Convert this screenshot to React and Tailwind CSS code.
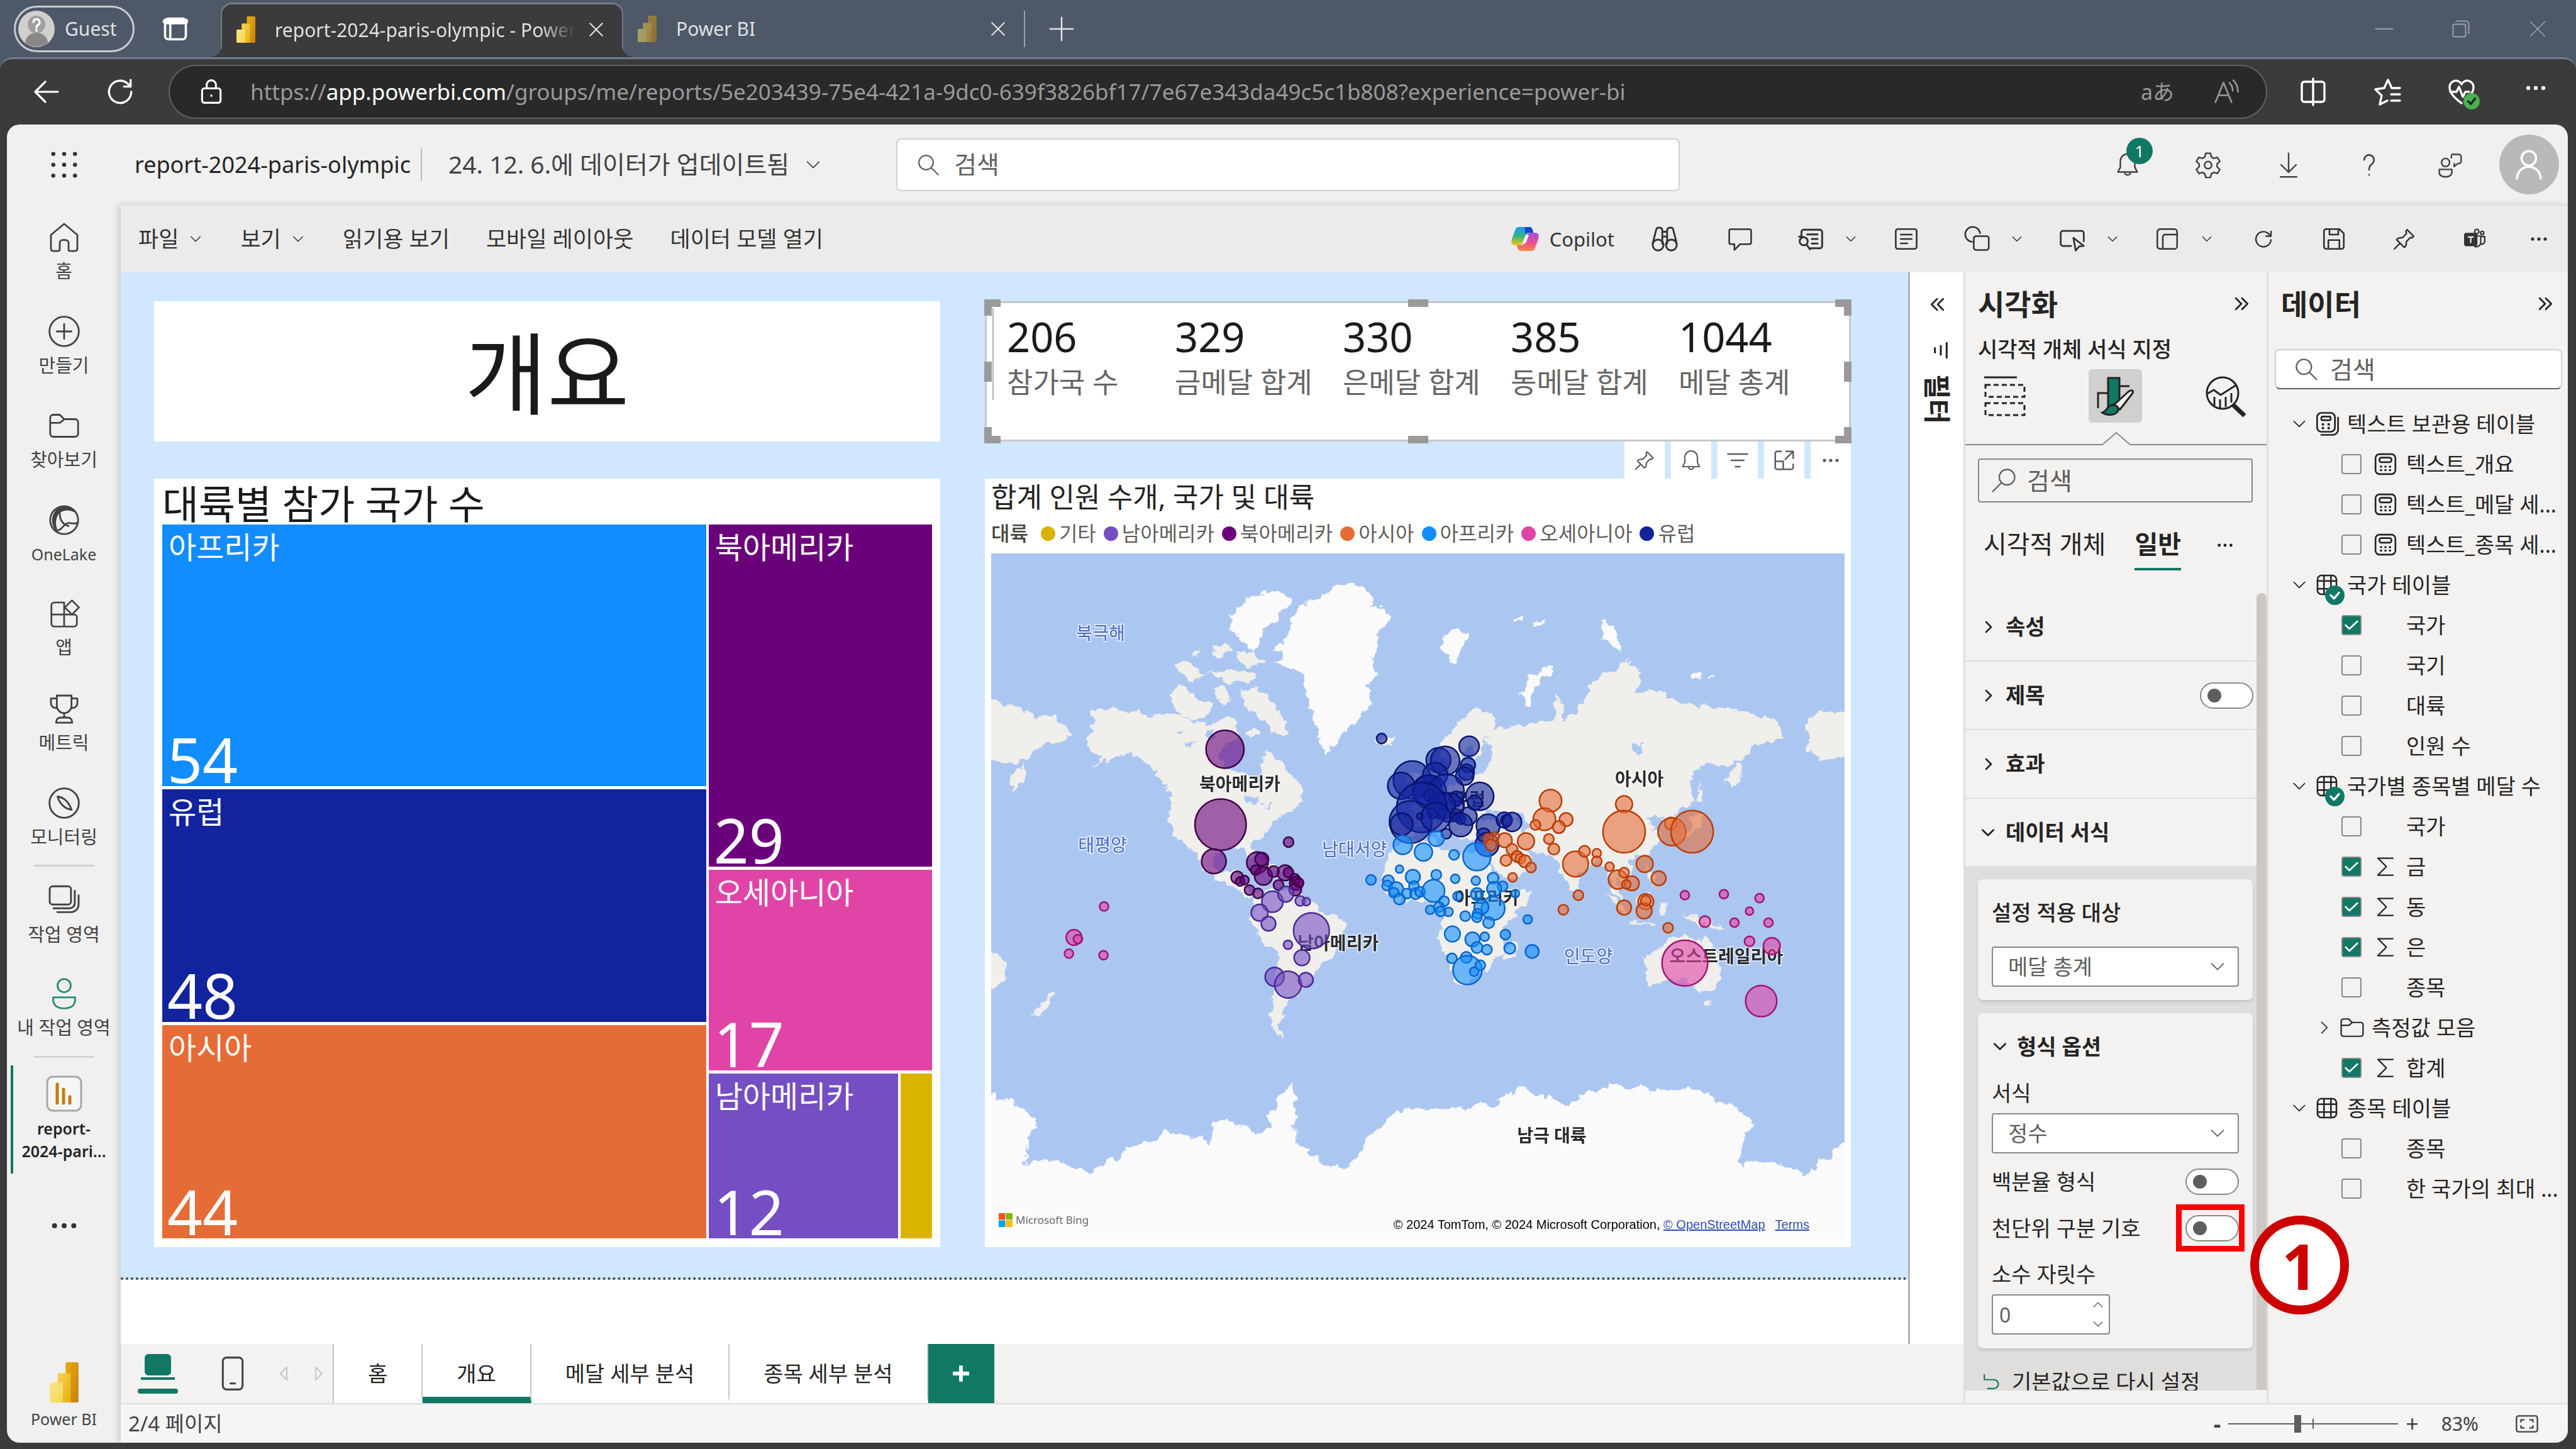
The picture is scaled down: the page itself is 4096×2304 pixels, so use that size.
import React, { useState } from 'react';

const TEAL = '#117865';

// ---------- icons ----------

const Icon = ({ size = 44, sw = 1.4, fill = 'none', className = '', children }) => (
  <svg
    width={size}
    height={size}
    viewBox="0 0 24 24"
    fill={fill}
    stroke="currentColor"
    strokeWidth={sw}
    strokeLinecap="round"
    strokeLinejoin="round"
    className={`shrink-0 ${className}`}
    aria-hidden="true"
  >
    {children}
  </svg>
);

const ChevronDown = ({ size = 28, sw = 1.6, className }) => (
  <Icon size={size} sw={sw} className={className}><path d="M4 8l8 8 8-8" /></Icon>
);
const ChevronRight = ({ size = 28, sw = 1.6, className }) => (
  <Icon size={size} sw={sw} className={className}><path d="M8 4l8 8-8 8" /></Icon>
);
const DoubleRight = ({ className }) => (
  <Icon size={26} sw={2.6} className={className}><path d="M3 4l8 8-8 8M12 4l8 8-8 8" /></Icon>
);
const DoubleLeft = () => (
  <Icon size={26} sw={2.6}><path d="M21 4l-8 8 8 8M12 4l-8 8 8 8" /></Icon>
);
const CloseIcon = ({ size = 30, sw = 1.6 }) => (
  <Icon size={size} sw={sw}><path d="M3 3l18 18M21 3L3 21" /></Icon>
);
const SearchIcon = ({ size = 42, sw = 1.3 }) => (
  <Icon size={size} sw={sw}><circle cx="10" cy="10" r="6.5" /><path d="M15 15l6 6" /></Icon>
);
const Dots = ({ size = 36 }) => (
  <Icon size={size} fill="currentColor" sw={0}>
    <circle cx="4" cy="12" r="2.1" /><circle cx="12" cy="12" r="2.1" /><circle cx="20" cy="12" r="2.1" />
  </Icon>
);
const BellIcon = ({ size = 46 }) => (
  <Icon size={size} sw={1.3}>
    <path d="M12 3a6 6 0 0 0-6 6v5l-2 4h16l-2-4V9a6 6 0 0 0-6-6zM9.500 18a2.500 2.500 0 0 0 5 0" />
  </Icon>
);
const PinIcon = ({ size = 42 }) => (
  <Icon size={size} sw={1.4}>
    <path d="M14.500 3.500l6 6-1.500 1.500-1.500-.3-3.500 3.500-.5 4-1.500 1.500-7-7 1.500-1.500 4-.5L14 7l-.5-2zM8 16l-5 5" />
  </Icon>
);
const FolderIcon = ({ size = 56 }) => (
  <Icon size={size} sw={1.2}>
    <path d="M2.500 6.500a2 2 0 0 1 2-2H9l3 3h7.500a2 2 0 0 1 2 2v8a2 2 0 0 1-2 2h-15a2 2 0 0 1-2-2zM2.500 10H8.500c1.500 0 2-1 3.500-2.500" />
  </Icon>
);
const TableIcon = () => (
  <Icon size={38} sw={1.6}>
    <rect x="2.500" y="2.500" width="19" height="19" rx="4" />
    <path d="M9 2.500v19M16 2.500v19M2.500 8h19M2.500 16h19" />
  </Icon>
);
const CalcIcon = () => (
  <Icon size={38} sw={1.7}>
    <rect x="2" y="2" width="20" height="20" rx="4" />
    <rect x="6" y="5.500" width="12" height="4.500" rx="1.800" />
    <path d="M7.500 14.500h.1M12 14.500h.1M16.500 14.500h.1M7.500 18h.1M12 18h.1M16.500 18h.1" strokeWidth="2.300" />
  </Icon>
);
const CalcStackIcon = () => (
  <Icon size={40} sw={1.6}>
    <rect x="2" y="1.500" width="17" height="18" rx="4" />
    <rect x="6" y="5" width="9" height="3.500" rx="1.500" />
    <path d="M7.500 12.500h.1M13 12.500h.1M7.500 16h.1M13 16h.1" strokeWidth="2.400" />
    <path d="M6 22.500h11a5 5 0 0 0 5-5V6" />
  </Icon>
);
const SigmaIcon = () => (
  <Icon size={36} sw={1.5}><path d="M20 3H4l9 9-9 9h16" /></Icon>
);

const PowerBiLogo = ({ width = 40, height = 48, dim = false }) => (
  <svg width={width} height={height} viewBox="0 0 40 56" className={dim ? 'shrink-0 opacity-50' : 'shrink-0'} aria-hidden="true">
    <defs>
      <linearGradient id="pbA" x1="0" y1="0" x2="1" y2="1"><stop offset="0" stopColor="#e6ad10" /><stop offset="1" stopColor="#c87e0e" /></linearGradient>
      <linearGradient id="pbB" x1="0" y1="0" x2="1" y2="1"><stop offset="0" stopColor="#f6d751" /><stop offset="1" stopColor="#e6ad10" /></linearGradient>
      <linearGradient id="pbC" x1="0" y1="0" x2="1" y2="1"><stop offset="0" stopColor="#f9e589" /><stop offset="1" stopColor="#f6d751" /></linearGradient>
    </defs>
    <rect x="22" y="0" width="18" height="56" rx="2" fill="url(#pbA)" />
    <path d="M11 17a2 2 0 0 1 2-2h14a2 2 0 0 1 2 2v39H11z" fill="url(#pbB)" />
    <path d="M0 30a2 2 0 0 1 2-2h13a3 3 0 0 1 3 3v25H2a2 2 0 0 1-2-2z" fill="url(#pbC)" />
  </svg>
);

const CopilotLogo = () => (
  <svg width="46" height="42" viewBox="0 0 46 42" aria-hidden="true">
    <defs>
      <linearGradient id="cpA" x1="0" y1="0" x2="0" y2="1"><stop offset="0" stopColor="#1b9df0" /><stop offset="0.500" stopColor="#36b37e" /><stop offset="1" stopColor="#f7c416" /></linearGradient>
      <linearGradient id="cpB" x1="0" y1="0" x2="0" y2="1"><stop offset="0" stopColor="#a04fe0" /><stop offset="0.500" stopColor="#e84a9c" /><stop offset="1" stopColor="#f9873c" /></linearGradient>
    </defs>
    <path d="M14 2h16c3 0 4 2 5 5l1 4h-6c-4 0-6 2-7 6l-3 9c-1 4-3 5-6 5H7c-5 0-7-4-5-10l5-14c1-3 3-5 7-5z" fill="url(#cpA)" />
    <path d="M22 2h8c3 0 4 2 5 5l1 4h-6c-3 0-5 1-6 4z" fill="#1645c8" />
    <path d="M32 40H16c-3 0-4-2-5-5l-1-4h6c4 0 6-2 7-6l3-9c1-4 3-5 6-5h7c5 0 7 4 5 10l-5 14c-1 3-3 5-7 5z" fill="url(#cpB)" />
    <path d="M23 16l-4 12h3c2 0 3-2 4-5l3-8h-3z" fill="#fff" opacity="0.900" />
  </svg>
);

// ---------- browser chrome ----------

const BrowserTabs = () => (
  <div className="flex h-[91px] items-center bg-[#4e5867] text-[30px] text-[#dfe1e4]">
    <button className="ml-[22px] flex h-[74px] w-[192px] items-center gap-4 rounded-full border-3 border-[#c9ccd0] pl-1">
      <svg width="58" height="58" viewBox="0 0 58 58" aria-hidden="true">
        <circle cx="29" cy="29" r="29" fill="#d2d0ce" />
        <path d="M11 51a18 16 0 0 1 36 0 29 29 0 0 1-36 0z" fill="#8a8886" />
        <circle cx="29" cy="22" r="14" fill="#a19f9d" />
        <path d="M24 18a5 5 0 1 1 7 5c-2 1-2 2-2 4M29 31v1" stroke="#fff" strokeWidth="3.500" fill="none" strokeLinecap="round" />
      </svg>
      Guest
    </button>
    <button className="ml-[43px] text-white" aria-label="탭 작업">
      <Icon size={44} sw={2}><rect x="3" y="3" width="18" height="18" rx="3" /><path d="M3.500 5.500h17" strokeWidth="5" /><path d="M7.500 8v13" /></Icon>
    </button>
    <div className="relative ml-[50px] flex h-[87px] w-[640px] items-center self-end rounded-t-[18px] border-x-2 border-t-3 border-[#717d8c] bg-[#3b3b3b] pb-1 pl-5 before:absolute before:bottom-0 before:-left-5 before:size-5 before:bg-[radial-gradient(circle_at_0_0,transparent_20px,#3b3b3b_20px)] after:absolute after:-right-5 after:bottom-0 after:size-5 after:bg-[radial-gradient(circle_at_100%_0,transparent_20px,#3b3b3b_20px)]">
      <PowerBiLogo width={36} height={42} />
      <span className="ml-7 w-[478px] overflow-hidden whitespace-nowrap [mask-image:linear-gradient(to_right,#000_88%,transparent)]">report-2024-paris-olympic - Power BI</span>
      <button className="ml-5" aria-label="탭 닫기"><CloseIcon size={26} sw={2} /></button>
    </div>
    <div className="flex w-[637px] items-center pl-5">
      <PowerBiLogo width={36} height={42} dim />
      <span className="ml-7 flex-1">Power BI</span>
      <button className="mr-7" aria-label="탭 닫기"><CloseIcon size={26} sw={2} /></button>
    </div>
    <div className="h-[58px] w-[2px] bg-[#9aa2ad]" />
    <button className="ml-[38px]" aria-label="새 탭"><Icon size={40} sw={1.5}><path d="M12 1v22M1 12h22" /></Icon></button>
    <div className="ml-auto flex text-[#98a0aa]">
      <button className="flex w-[122px] justify-center" aria-label="최소화"><Icon size={30} sw={1.6}><path d="M1 12h22" /></Icon></button>
      <button className="flex w-[122px] justify-center" aria-label="이전 크기로"><Icon size={30} sw={1.6}><rect x="2" y="6" width="16" height="16" rx="2" /><path d="M6 2h12a4 4 0 0 1 4 4v12" /></Icon></button>
      <button className="flex w-[122px] justify-center" aria-label="닫기"><CloseIcon size={30} sw={1.4} /></button>
    </div>
  </div>
);

const AddressBar = () => (
  <div className="bg-[#4e5867]">
    <div className="flex h-[107px] items-center rounded-t-[20px] border-t-3 border-[#717d8c] bg-[#3b3b3b] text-white">
      <button className="ml-[50px]" aria-label="뒤로"><Icon size={48} sw={1.6}><path d="M21 12H3M11 4l-8 8 8 8" /></Icon></button>
      <button className="ml-[68px]" aria-label="새로 고침"><Icon size={50} sw={1.6}><path d="M20.500 12A8.500 8.500 0 1 1 17.500 5.500L20 8M20 3v5h-5" /></Icon></button>
      <div className="ml-[52px] flex h-[86px] flex-1 items-center rounded-full border-2 border-[#616161] bg-[#292929] pr-[40px] pl-[44px]">
        <Icon size={44} sw={1.7}><rect x="4" y="9" width="16" height="12.500" rx="2" /><path d="M8 9V6a4 4 0 0 1 8 0v3M12 15v.5" /></Icon>
        <span className="ml-10 flex-1 text-[35px] whitespace-nowrap text-[#9a9a9a]">
          https://<span className="text-white">app.powerbi.com</span>/groups/me/reports/5e203439-75e4-421a-9dc0-639f3826bf17/7e67e343da49c5c1b808?experience=power-bi
        </span>
        <button className="mr-[62px] text-[34px] leading-none text-[#9a9a9a]" aria-label="번역">aあ</button>
        <button className="text-[#9a9a9a]" aria-label="소리내어 읽기">
          <Icon size={44} sw={1.4}><path d="M2 21L9 4l7 17M4.500 15h9M14 4c2 2 3 4 3 7M17.500 2c3 3 4 6 4 10" /></Icon>
        </button>
      </div>
      <div className="ml-[14px] flex pr-[5px]">
        <button className="flex w-[118px] justify-center" aria-label="화면 분할"><Icon size={48} sw={1.7}><path d="M9 4H5a2 2 0 0 0-2 2v12a2 2 0 0 0 2 2h4M15 4h4a2 2 0 0 1 2 2v12a2 2 0 0 1-2 2h-4M12 1.500v21M9 4h6M9 20h6" /></Icon></button>
        <button className="flex w-[118px] justify-center" aria-label="즐겨찾기"><Icon size={48} sw={1.7}><path d="M22 9h-6.500L12.500 2.500 9.500 9l-7 1 5 5-1.500 7 6-3M15 14h7M15 19h7" /></Icon></button>
        <button className="relative flex w-[118px] justify-center" aria-label="브라우저 필수 요소">
          <Icon size={48} sw={1.7}><path d="M12 21C5 16 2.500 12 2.500 8.500A5 5 0 0 1 12 6a5 5 0 0 1 9.500 2.500c0 2-1 4-2 5.500M3 12h5l2-4 3 8 2-4h3" /></Icon>
          <span className="absolute right-[30px] -bottom-1 size-[26px] rounded-full bg-[#4caf50]"><Icon size={26} sw={3} className="text-[#1f1f1f]"><path d="M7 12l4 4 6-8" /></Icon></span>
        </button>
        <button className="flex w-[118px] justify-center" aria-label="설정 및 기타"><Dots size={36} /></button>
      </div>
    </div>
  </div>
);

// ---------- app header ----------

const headerActions = [
  { label: '설정', icon: <Icon size={46} sw={1.3}><path d="M10 2.500h4l.7 3 2 1.200 3-.9 2 3.400-2.300 2.200v2.200l2.300 2.200-2 3.400-3-.9-2 1.200-.7 3h-4l-.7-3-2-1.200-3 .9-2-3.400 2.300-2.200v-2.200L2.300 9.200l2-3.400 3 .9 2-1.200z" /><circle cx="12" cy="12.300" r="3" /></Icon> },
  { label: '다운로드', icon: <Icon size={44} sw={1.3}><path d="M12 2v16M5.500 12l6.500 6.500 6.500-6.500M5 22.500h14" /></Icon> },
  { label: '도움말', icon: <Icon size={42} sw={1.5}><path d="M7.500 7.500a4.500 4.500 0 1 1 7.500 3.500c-2 1.500-3 2.500-3 5.500M12 21v.3" /></Icon> },
  { label: '피드백', icon: <Icon size={44} sw={1.3}><circle cx="8.500" cy="10" r="3.500" /><path d="M3 16h11v2c0 3-2 4.500-5.500 4.500S3 21 3 18zM14 3h6a2 2 0 0 1 2 2v4a2 2 0 0 1-2 2h-1l-3 2.500V11M13.500 6V4" /></Icon> },
];

const AppHeader = () => (
  <header className="flex h-[127px] items-center">
    <button className="flex w-[181px] justify-center text-[#333]" aria-label="앱 시작 관리자">
      <Icon size={46} fill="currentColor" sw={0}>
        {[3, 12, 21].map(y => [3, 12, 21].map(x => <circle key={`${x}-${y}`} cx={x} cy={y} r="1.700" />))}
      </Icon>
    </button>
    <h1 className="ml-[22px] text-[36px] text-[#242424]">report-2024-paris-olympic</h1>
    <div className="ml-4 h-[52px] w-[2px] bg-[#bdbdbd]" />
    <button className="ml-[42px] flex items-center text-[39px] text-[#424242]">
      24. 12. 6.에 데이터가 업데이트됨
      <ChevronDown className="ml-6" />
    </button>
    <label className="ml-[118px] flex h-[84px] w-[1246px] items-center rounded-lg border-2 border-[#d1d1d1] bg-white px-7 text-[#616161]">
      <SearchIcon />
      <input type="search" placeholder="검색" aria-label="검색" className="ml-5 flex-1 bg-transparent text-[39px] outline-none placeholder:text-[#616161]" />
    </label>
    <div className="ml-auto flex items-center text-[#424242]">
      <button className="relative flex w-32 justify-center" aria-label="알림">
        <BellIcon />
        <span className="absolute -top-5 left-[62px] flex size-[42px] items-center justify-center rounded-full bg-[#117865] text-[26px] leading-none text-white">1</span>
      </button>
      {headerActions.map(a => (
        <button key={a.label} className="flex w-32 justify-center" aria-label={a.label}>{a.icon}</button>
      ))}
      <button className="flex w-[124px] justify-center" aria-label="계정">
        <span className="flex size-[95px] items-center justify-center rounded-full bg-[#b9b9b9] text-white">
          <Icon size={50} sw={1.7}><circle cx="12" cy="7" r="5.500" /><path d="M3 22.500a9 9 0 0 1 18 0" /></Icon>
        </span>
      </button>
    </div>
  </header>
);

// ---------- left nav ----------

const navItems = [
  { label: '홈', icon: <Icon size={56} sw={1.2}><path d="M3 10.500L12 3l9 7.500V20a1.500 1.500 0 0 1-1.500 1.500H16a1 1 0 0 1-1-1V16a2 2 0 0 0-2-2h-2a2 2 0 0 0-2 2v4.500a1 1 0 0 1-1 1H4.500A1.500 1.500 0 0 1 3 20z" /></Icon> },
  { label: '만들기', icon: <Icon size={56} sw={1.2}><circle cx="12" cy="12" r="10" /><path d="M12 7v10M7 12h10" /></Icon> },
  { label: '찾아보기', icon: <FolderIcon /> },
  { label: 'OneLake', latin: true, icon: <Icon size={56} sw={1.2}><circle cx="12" cy="12" r="9.500" /><path d="M8 4.500C12 3 16 3 19 6a10 10 0 0 0-11 1 12 12 0 0 0-1 12A10 10 0 0 1 8 4.500z" fill="currentColor" /><path d="M9 7c0 5 2 8 6 9M8 19c3-1 4-5 7-5s5 1 6.500-.5" /></Icon> },
  { label: '앱', icon: <Icon size={54} sw={1.2}><path d="M12 12.500V4H5a2 2 0 0 0-2 2v13a2 2 0 0 0 2 2h14a2 2 0 0 0 2-2v-4.500a2 2 0 0 0-2-2H3M12 12.500V21M17.500 2.500l5 5-5 5-5-5z" /></Icon> },
  { label: '메트릭', icon: <Icon size={56} sw={1.2}><path d="M7 3h10v7a5 5 0 0 1-10 0zM7 5H3v3a3.500 3.500 0 0 0 4 3.500M17 5h4v3a3.500 3.500 0 0 1-4 3.500M12 15v3M6.500 21.500c0-2 1-3.500 3-3.500h5c2 0 3 1.500 3 3.500z" /></Icon> },
  { label: '모니터링', icon: <Icon size={56} sw={1.2}><circle cx="12" cy="12" r="10" /><path d="M7.500 7.500c4 .5 7.500 3.500 9.500 9-4-.5-8-3.500-9.500-9z" /></Icon> },
];

const workspaceItems = [
  { label: '작업 영역', icon: <Icon size={58} sw={1.2}><rect x="2.500" y="3" width="14" height="12" rx="2" /><path d="M5 17.500h10.500a3.500 3.500 0 0 0 3.500-3.500V6M7.500 20h9a5 5 0 0 0 5-5V9" /></Icon> },
  { label: '내 작업 영역', icon: <Icon size={56} sw={1.2} className="text-[#2a8a76]"><circle cx="12" cy="6.500" r="4.500" /><path d="M4.500 14.500h15v1.500c0 4-3 6-7.500 6s-7.500-2-7.500-6z" /></Icon> },
];

const NavItem = ({ item }) => (
  <a href="#" className="flex h-[150px] flex-col items-center pt-[24px] text-[#424242]">
    {item.icon}
    <span className={`mt-2 leading-[36px] ${item.latin ? 'text-[25px]' : 'text-[29px]'}`}>{item.label}</span>
  </a>
);

const SideNav = () => (
  <nav className="flex w-[181px] shrink-0 flex-col">
    {navItems.map(item => <NavItem key={item.label} item={item} />)}
    <div className="mx-auto h-[3px] w-[96px] bg-[#d1d1d1]" />
    {workspaceItems.map(item => <NavItem key={item.label} item={item} />)}
    <div className="mx-auto mt-px h-[3px] w-[96px] bg-[#d1d1d1]" />
    <a href="#" className="mt-3 ml-[6px] flex h-[172px] flex-col items-center border-l-4 border-[#117865] pt-4 pr-[10px] text-[25px] leading-[36px] font-semibold text-[#242424]">
      <svg width="58" height="58" viewBox="0 0 58 58" aria-hidden="true">
        <rect x="2" y="2" width="54" height="54" rx="9" fill="#f6f6f6" stroke="#a8a8a8" strokeWidth="3" />
        <path d="M18 14v30M28 22v22M38 34v10" stroke="#c27c0e" strokeWidth="5" strokeLinecap="round" />
      </svg>
      <span className="mt-2">report-</span>
      <span>2024-pari...</span>
    </a>
    <button className="mx-auto mt-[60px] text-[#333]" aria-label="더 보기"><Dots size={46} /></button>
    <a href="#" className="mt-auto mb-5 flex flex-col items-center text-[25px] leading-[36px] text-[#424242]">
      <PowerBiLogo width={50} height={64} />
      <span className="mt-2">Power BI</span>
    </a>
  </nav>
);

// ---------- report toolbar ----------

const tools = [
  { label: '찾기', icon: <Icon size={46} sw={1.5} className="mr-4"><circle cx="6.500" cy="17" r="4.500" /><circle cx="17.500" cy="17" r="4.500" /><path d="M2 16L5 4c.5-2 5-2 5 1v11M22 16L19 4c-.5-2-5-2-5 1v11M10 10h4M10 6h4" /></Icon> },
  { label: '댓글', icon: <Icon size={44} sw={1.4}><path d="M4 3.500h16a1.500 1.500 0 0 1 1.500 1.500v10a1.500 1.500 0 0 1-1.500 1.500h-8L7 21.500v-5H4A1.500 1.500 0 0 1 2.500 15V5A1.500 1.500 0 0 1 4 3.500z" /></Icon> },
  { label: '검색 보기', menu: true, icon: <Icon size={44} sw={1.6}><path d="M4 9V6a2 2 0 0 1 2-2h14a2 2 0 0 1 2 2v12a2 2 0 0 1-2 2h-8M9 8h9M13 12h5M13 16h5" /><circle cx="6" cy="14" r="3.500" /><path d="M8.500 17l3 4M2 10h3" /></Icon> },
  { label: '텍스트', icon: <Icon size={42} sw={1.5}><rect x="2.500" y="3" width="19" height="18" rx="2" /><path d="M7 8h10M7 12h10M7 16h6" /></Icon> },
  { label: '도형', menu: true, icon: <Icon size={44} sw={1.4}><path d="M8 14.500A6.500 6.500 0 1 1 15 7" /><rect x="9.500" y="9.500" width="13" height="12" rx="2" /></Icon> },
  { label: '단추', menu: true, icon: <Icon size={44} sw={1.5}><path d="M11 18H4a2 2 0 0 1-2-2V7a2 2 0 0 1 2-2h16a2 2 0 0 1 2 2v7M13 11l9 7-4 .5-3 3.500z" /></Icon> },
  { label: '페이지', menu: true, icon: <Icon size={42} sw={1.4}><rect x="3" y="3" width="18" height="18" rx="2.500" /><path d="M8 21V10a2 2 0 0 1 2-2h11" /></Icon> },
  { label: '새로 고침', icon: <Icon size={36} sw={1.6}><path d="M20 13a8 8 0 1 1-3-7l3 3M20 4v5h-5" /></Icon> },
  { label: '저장', icon: <Icon size={42} sw={1.5}><path d="M3 5a2 2 0 0 1 2-2h12l4 4v12a2 2 0 0 1-2 2H5a2 2 0 0 1-2-2zM8 3v5h8V3M7 21v-8h10v8" /></Icon> },
  { label: '고정', icon: <PinIcon size={42} /> },
  { label: 'Teams', icon: <Icon size={38} sw={1.4}><rect x="2" y="6.500" width="12" height="12" rx="1.500" fill="currentColor" /><path d="M5.500 10h5M8 10v5.500" stroke="#ebebeb" /><circle cx="14" cy="4.500" r="2.200" /><circle cx="19.500" cy="6" r="1.600" /><path d="M14.500 9H18v6a4.500 4.500 0 0 1-6 4.500M18 9.500h4v5a3 3 0 0 1-4 2.500" /></Icon> },
];

const Toolbar = () => (
  <div className="flex h-[108px] items-center border-t-2 border-[#dedede] bg-[#ebebeb] text-[35px] text-[#333]">
    <button className="ml-[28px] flex items-center gap-4">파일 <ChevronDown size={22} /></button>
    <button className="ml-[60px] flex items-center gap-4">보기 <ChevronDown size={22} /></button>
    <button className="ml-[60px]">읽기용 보기</button>
    <button className="ml-[58px]">모바일 레이아웃</button>
    <button className="ml-[58px]">데이터 모델 열기</button>
    <div className="ml-auto flex items-center">
      <button className="mr-8 flex items-center gap-4 text-[31px]"><CopilotLogo /> Copilot</button>
      {tools.map(t => (
        <button key={t.label} className={`flex items-center ${t.menu ? 'w-[152px] pl-[34px]' : 'w-[112px] justify-center'}`} aria-label={t.label}>
          {t.icon}
          {t.menu && <ChevronDown size={20} sw={1.8} className="ml-8" />}
        </button>
      ))}
      <button className="flex w-[92px] justify-center" aria-label="기타 옵션"><Dots size={30} /></button>
    </div>
  </div>
);

// ---------- report visuals ----------

const kpis = [
  { value: '206', label: '참가국 수' },
  { value: '329', label: '금메달 합계' },
  { value: '330', label: '은메달 합계' },
  { value: '385', label: '동메달 합계' },
  { value: '1044', label: '메달 총계' },
];

const handleCls = [
  'top-[-6px] left-[-4px] h-[26px] w-[26px] border-t-12 border-l-12',
  'top-[-6px] right-[-4px] h-[26px] w-[26px] border-t-12 border-r-12',
  'bottom-[-6px] left-[-4px] h-[26px] w-[26px] border-b-12 border-l-12',
  'bottom-[-6px] right-[-4px] h-[26px] w-[26px] border-b-12 border-r-12',
  'top-[-6px] left-1/2 h-[12px] w-[32px] -translate-x-1/2 bg-[#9a9a9a]',
  'bottom-[-6px] left-1/2 h-[12px] w-[32px] -translate-x-1/2 bg-[#9a9a9a]',
  'top-1/2 left-[-4px] h-[32px] w-[12px] -translate-y-1/2 bg-[#9a9a9a]',
  'top-1/2 right-[-4px] h-[32px] w-[12px] -translate-y-1/2 bg-[#9a9a9a]',
];

const KpiCard = () => (
  <section className="relative h-[223px] border-3 border-[#c8c8c8] bg-white pt-[8px] pl-[9px]">
    <div className="flex h-[146px] border-l-2 border-[#b0b0b0] pl-[21px]">
      {kpis.map(k => (
        <div key={k.label} className="w-[267px]">
          <div className="text-[65px] leading-[90px] text-[#1a1a1a]">{k.value}</div>
          <div className="text-[45px] leading-[56px] text-[#666]">{k.label}</div>
        </div>
      ))}
    </div>
    {handleCls.map(c => <span key={c} className={`absolute border-[#9a9a9a] ${c}`} />)}
  </section>
);

const Tile = ({ name, value, color }) => (
  <div className="flex min-h-0 w-0 min-w-full flex-col justify-between text-white" style={{ flex: `${value} 1 0`, background: color }}>
    <span className="mt-1 ml-[10px] text-[48px] leading-[64px] whitespace-nowrap">{name}</span>
    <span className="ml-[8px] text-[98px] leading-[86px]">{value}</span>
  </div>
);

const TreeMap = () => (
  <section className="flex flex-1 flex-col bg-white px-[13px] pb-[14px]">
    <h2 className="h-[73px] text-[63px] leading-[80px] text-[#1a1a1a]">대륙별 참가 국가 수</h2>
    <div className="flex flex-1 gap-[4px]">
      <div className="flex flex-col gap-[5px]" style={{ flex: '146 1 0' }}>
        <Tile name="아프리카" value={54} color="#118dff" />
        <Tile name="유럽" value={48} color="#12239e" />
        <Tile name="아시아" value={44} color="#e66c37" />
      </div>
      <div className="flex flex-col gap-[5px]" style={{ flex: '60 1 0' }}>
        <Tile name="북아메리카" value={29} color="#6b007b" />
        <Tile name="오세아니아" value={17} color="#e044a7" />
        <div className="flex gap-[4px]" style={{ flex: '14 1 0' }}>
          <div className="flex flex-col" style={{ flex: '12 1 0' }}>
            <Tile name="남아메리카" value={12} color="#744ec2" />
          </div>
          <div className="bg-[#d9b300]" style={{ flex: '2 1 0' }} />
        </div>
      </div>
    </div>
  </section>
);

const legend = [
  { name: '기타', color: '#d9b300' },
  { name: '남아메리카', color: '#744ec2' },
  { name: '북아메리카', color: '#6b007b' },
  { name: '아시아', color: '#e66c37' },
  { name: '아프리카', color: '#118dff' },
  { name: '오세아니아', color: '#e044a7' },
  { name: '유럽', color: '#12239e' },
];

// bubbles as [x, y, r] on the map grid
const bubbles = [
  { fill: '#6b007b', stroke: '#3d0047', points: [[435, 764, 34], [427, 1044, 46], [415, 1180, 22], [549, 1109, 9], [493, 1185, 19], [501, 1172, 12], [490, 1213, 9], [504, 1235, 16], [522, 1218, 10], [543, 1223, 14], [549, 1222, 9], [457, 1240, 11], [462, 1255, 8], [470, 1250, 8], [479, 1287, 9], [494, 1299, 9], [531, 1268, 9], [560, 1245, 9], [563, 1262, 12], [561, 1285, 11], [563, 1250, 7], [568, 1260, 8]] },
  { fill: '#744ec2', stroke: '#4a2a94', points: [[520, 1330, 19], [544, 1302, 14], [497, 1371, 15], [513, 1412, 13], [570, 1327, 9], [581, 1330, 7], [590, 1438, 32], [548, 1490, 8], [573, 1538, 14], [524, 1609, 17], [548, 1638, 24], [580, 1620, 13]] },
  { fill: '#12239e', stroke: '#0a1470', points: [[716, 724, 9], [873, 753, 18], [818, 804, 22], [830, 807, 26], [871, 822, 13], [868, 849, 14], [865, 864, 16], [771, 878, 34], [751, 900, 24], [812, 859, 22], [798, 915, 26], [802, 922, 30], [832, 922, 32], [892, 939, 25], [802, 936, 11], [814, 963, 6], [850, 947, 13], [883, 963, 13], [837, 980, 26], [824, 973, 24], [788, 980, 45], [768, 1034, 38], [752, 1042, 20], [785, 1013, 6], [807, 1002, 9], [825, 999, 8], [813, 1016, 26], [850, 1009, 11], [853, 1016, 9], [858, 1024, 9], [871, 1013, 16], [858, 1045, 21], [832, 1078, 9], [907, 1049, 21], [936, 1027, 14], [940, 1028, 10], [950, 1034, 17], [899, 1082, 12], [905, 1118, 21]] },
  { fill: '#118dff', stroke: '#0a66cc', points: [[754, 1119, 17], [814, 1095, 14], [791, 1146, 16], [846, 1156, 9], [887, 1163, 25], [748, 1209, 7], [697, 1249, 9], [772, 1238, 13], [814, 1230, 9], [848, 1245, 8], [885, 1252, 8], [916, 1243, 10], [728, 1252, 10], [726, 1270, 9], [742, 1284, 13], [738, 1297, 9], [748, 1320, 10], [774, 1272, 9], [761, 1300, 9], [777, 1300, 10], [785, 1293, 9], [809, 1290, 20], [828, 1328, 9], [819, 1350, 9], [803, 1360, 8], [822, 1366, 9], [836, 1368, 8], [933, 1273, 9], [918, 1283, 13], [956, 1300, 7], [887, 1302, 11], [852, 1310, 8], [916, 1355, 21], [895, 1350, 13], [866, 1384, 9], [888, 1375, 9], [887, 1388, 9], [908, 1408, 10], [978, 1396, 8], [938, 1452, 9], [843, 1450, 14], [879, 1470, 13], [901, 1460, 8], [887, 1500, 10], [905, 1508, 9], [946, 1503, 10], [986, 1515, 12], [842, 1540, 9], [868, 1537, 10], [870, 1584, 26], [882, 1590, 8], [893, 1566, 9]] },
  { fill: '#e66c37', stroke: '#b83d08', points: [[1019, 955, 20], [1008, 1024, 20], [992, 1045, 9], [1047, 1025, 12], [1034, 1053, 11], [1151, 968, 15], [1151, 1070, 38], [1235, 1040, 11], [1237, 1070, 25], [1273, 1070, 38], [1064, 1190, 23], [1080, 1143, 10], [1102, 1150, 8], [1102, 1180, 9], [1016, 1097, 9], [1025, 1135, 10], [975, 1106, 15], [937, 1102, 13], [919, 1088, 8], [907, 1096, 9], [912, 1120, 10], [950, 1136, 10], [939, 1177, 10], [959, 1162, 10], [965, 1170, 9], [973, 1180, 11], [984, 1203, 9], [951, 1240, 8], [1125, 1200, 8], [1140, 1248, 17], [1151, 1222, 9], [1165, 1262, 13], [1155, 1266, 8], [1188, 1190, 15], [1213, 1243, 13], [1151, 1352, 13], [1190, 1330, 14], [1187, 1364, 14], [1190, 1326, 9], [1069, 1306, 9], [1042, 1360, 9], [1230, 1427, 9]] },
  { fill: '#e044a7', stroke: '#a3146f', points: [[218, 1348, 8], [164, 1463, 14], [171, 1469, 8], [155, 1523, 8], [217, 1529, 8], [1260, 1306, 8], [1330, 1302, 8], [1394, 1317, 8], [1376, 1365, 7], [1296, 1404, 10], [1349, 1408, 8], [1410, 1408, 8], [1376, 1477, 9], [1416, 1495, 15], [1260, 1558, 41], [1397, 1699, 28]] },
];

const mapLabels = [
  { text: '북극해', x: 175, y: 137, sea: true },
  { text: '태평양', x: 178, y: 473, sea: true },
  { text: '남대서양', x: 578, y: 480, sea: true },
  { text: '인도양', x: 949, y: 650, sea: true },
  { text: '북아메리카', x: 396, y: 376 },
  { text: '남아메리카', x: 552, y: 629 },
  { text: '유럽', x: 760, y: 400 },
  { text: '아프리카', x: 788, y: 557 },
  { text: '아시아', x: 1030, y: 368 },
  { text: '오스트레일리아', x: 1168, y: 650 },
  { text: '남극 대륙', x: 891, y: 934 },
];

const ice = [
  // Greenland
  'M562 240L580 220 600 210 620 180 640 155 665 143 685 160 700 200 690 230 715 240 735 265 725 300 705 340 710 380 700 420 705 480 690 520 697 560 690 620 670 670 650 700 635 740 620 780 608 750 600 700 590 620 580 540 575 480 550 460 530 440 535 410 525 390 545 350 555 300Z',
  // Ellesmere
  'M470 210L500 185 525 178 550 195 557 215 540 250 525 290 500 320 500 360 485 400 470 370 455 340 440 300 450 260Z',
  // Svalbard, Severnaya Zemlya, Franz Josef
  'M820 350L850 320 875 340 860 380 850 440 835 430 825 390Z',
  'M1110 290L1120 285 1135 340 1150 400 1140 400 1115 350Z',
  'M950 280L965 270 970 285 955 290ZM990 290L1008 285 1005 305 995 305Z',
  'M1020 450L1025 465 1000 510 985 560 985 610 970 600 968 560 980 500Z',
  'M1270 480L1285 475 1290 500 1275 505ZM1300 490L1315 490 1310 505Z',
];

const land = [
  // Canadian archipelago
  'M345 460L360 430 385 460 400 490 370 510ZM375 410L388 390 385 430ZM410 385L440 370 450 400 420 420Z',
  'M400 480L450 470 490 485 490 510 440 515ZM455 400L490 405 505 440 480 460 455 440Z',
  'M335 560L345 520 365 540 385 580 410 590 410 630 385 655 360 640 345 610Z',
  'M415 535L435 530 445 580 430 600 418 570Z',
  'M465 540L500 540 520 590 535 640 550 690 545 725 520 700 510 660 490 650 480 610 465 590Z',
  'M470 690L490 680 500 710 480 725Z',
  // North America
  'M187 730L200 700 188 680 205 650 195 625 225 612 270 620 300 640 330 625 360 640 390 670 420 670 440 650 455 665 450 700 460 720 440 740 425 780 435 830 470 860 490 870 495 900 503 870 500 800 510 770 525 790 540 830 555 870 575 900 570 930 578 960 555 990 530 1010 520 1040 505 1090 480 1120 490 1160 480 1170 470 1130 430 1130 415 1160 415 1200 430 1230 450 1215 462 1225 455 1250 475 1280 490 1310 480 1315 450 1275 420 1245 395 1210 385 1160 365 1120 345 1080 335 1030 338 960 335 910 320 880 300 820 275 790 250 785 225 800 200 840 215 790 195 770Z',
  'M490 1180L525 1195 540 1215 515 1205Z',
  // South America
  'M490 1310L505 1290 540 1280 575 1310 600 1340 610 1370 650 1395 655 1420 640 1470 630 1540 604 1572 584 1630 563 1680 548 1705 538 1747 533 1789 540 1851 523 1814 518 1747 523 1664 528 1580 533 1522 503 1480 493 1439 482 1400 485 1350Z',
  // Africa
  'M735 1120L760 1105 800 1095 815 1100 820 1130 850 1150 880 1140 905 1150 910 1200 925 1260 945 1290 985 1290 975 1340 940 1400 930 1450 938 1500 915 1550 905 1580 890 1610 866 1642 846 1630 835 1539 820 1480 820 1430 830 1390 815 1360 800 1330 770 1325 740 1330 720 1290 715 1240 722 1190 735 1150Z',
  'M950 1480L958 1500 945 1550 935 1555 932 1520Z',
  // Eurasia
  'M735 1080L735 1020 775 1015 765 980 800 940 820 890 835 900 860 885 880 860 900 850 915 800 910 750 900 730 925 690 950 680 970 670 1000 660 1030 665 1025 610 1030 560 1040 600 1040 650 1060 640 1070 600 1085 560 1090 520 1110 490 1140 470 1150 425 1165 450 1183 480 1180 520 1170 550 1215 550 1245 590 1280 600 1330 610 1380 635 1420 650 1435 710 1420 740 1385 745 1370 790 1340 820 1300 820 1275 850 1270 920 1280 960 1250 990 1240 1010 1245 1060 1230 1050 1220 1010 1190 1020 1210 1070 1215 1110 1200 1150 1175 1165 1160 1170 1170 1200 1165 1240 1150 1250 1135 1230 1140 1280 1150 1330 1135 1300 1125 1250 1120 1200 1100 1170 1085 1200 1070 1230 1065 1290 1050 1270 1035 1200 1020 1160 990 1140 970 1130 990 1170 985 1200 945 1250 925 1230 905 1150 900 1100 870 1100 840 1080 820 1090 800 1050 780 1060 760 1100Z',
  'M822 800L820 745 840 700 860 650 885 618 915 640 925 700 900 720 895 790 880 800 875 740 865 780 855 850 840 860 835 800Z',
  'M765 860L780 850 790 900 785 940 765 940ZM700 725L735 720 735 745 710 750Z',
  'M1360 810L1365 850 1345 915 1335 880 1345 830ZM1275 1010L1292 1000 1290 1060 1262 1095 1245 1100 1270 1060ZM1285 880L1292 960 1282 960Z',
  // Sumatra, Java, Borneo, New Guinea
  'M1118 1300L1135 1320 1160 1365 1155 1385 1135 1350ZM1160 1405L1205 1412 1205 1420 1165 1415ZM1172 1320L1195 1295 1202 1340 1185 1370ZM1213 1335L1230 1335 1222 1385Z',
  'M1255 1372L1285 1380 1312 1400 1325 1430 1300 1425 1275 1405ZM1190 1190L1205 1230 1210 1270 1195 1240Z',
  // Chukotka and Kamchatka on the left edge, Alaska on the right one
  'M0 580L60 605 90 640 130 640 160 710 140 740 95 750 85 790 60 815 40 815 0 800ZM75 820L75 870 60 915 50 890 58 840Z',
  'M1560 620L1500 615 1480 650 1475 690 1490 720 1475 760 1495 800 1520 800 1560 780Z',
  // Australia, Tasmania, New Zealand
  'M1188 1530L1218 1505 1238 1464 1258 1451 1284 1468 1293 1480 1299 1455 1309 1497 1324 1555 1324 1614 1309 1664 1284 1664 1268 1622 1238 1610 1193 1639Z',
  'M1296 1695L1308 1695 1302 1715ZM126 1660L129 1672 101 1755 90 1747ZM0 1500L30 1522 42 1572 35 1630 0 1664Z',
];

const lakes = 'M890 1010L920 990 945 1010 930 1030 895 1030ZM957 1000L972 990 978 1040 975 1080 964 1060ZM470 945L490 935 500 960 485 975ZM500 975L520 970 515 985ZM345 700L362 690 358 712ZM360 745L385 735 375 760ZM1170 740L1182 750 1175 785 1168 770ZM400 700L415 690 412 720Z';

const antarctica = 'M0 800L50 840 75 880 98 910 95 950 80 1000 75 1130 90 1105 140 1115 195 1165 220 1095 235 1105 260 1040 310 1010 325 970 350 985 390 1000 405 1025 412 930 430 920 465 950 485 980 515 950 505 910 520 860 550 760 557 850 558 1010 580 1060 605 1120 630 1135 650 1135 670 1080 685 1000 710 950 735 890 775 868 860 878 895 845 912 880 925 830 965 770 985 810 1020 820 1042 865 1080 790 1110 785 1115 755 1140 775 1160 790 1175 775 1190 795 1245 785 1285 790 1310 840 1345 870 1375 920 1365 970 1350 1030 1352 1130 1365 1105 1420 1120 1472 1165 1495 1095 1510 1100 1520 1050 1560 1010V1500H0Z';

const WorldMap = () => (
  <svg viewBox="0 0 1357 1089" preserveAspectRatio="xMidYMid slice" className="absolute inset-0 size-full" role="img" aria-label="세계 지도">
    <defs>
      <filter id="coast" x="-2%" y="-2%" width="104%" height="104%">
        <feTurbulence type="fractalNoise" baseFrequency="0.07" numOctaves="3" seed="4" />
        <feDisplacementMap in="SourceGraphic" scale="18" xChannelSelector="R" yChannelSelector="G" />
      </filter>
    </defs>
    <rect width="1357" height="1089" fill="#abc6f1" />
    <g filter="url(#coast)">
      <g transform="translate(-12.400 -15.800) scale(0.8846 0.42746)">
        {land.map(d => <path key={d} d={d} fill="#f0efeb" />)}
        {ice.map(d => <path key={d} d={d} fill="#fafafa" />)}
        <path d={lakes} fill="#abc6f1" />
      </g>
      <path d={antarctica} fill="#fafafa" transform="translate(-12.400 570.600) scale(0.8905 0.3562)" />
    </g>
    <g fontSize="28" textAnchor="middle" stroke="#fff" strokeOpacity="0.600" strokeWidth="4" paintOrder="stroke" strokeLinejoin="round">
      {mapLabels.map(l => (
        <text key={l.text} x={l.x} y={l.y} fill={l.sea ? '#4f6cc8' : '#2b2b2b'} fontWeight={l.sea ? 400 : 700}>{l.text}</text>
      ))}
    </g>
    {bubbles.map(b => (
      <g key={b.fill} fill={b.fill} fillOpacity="0.600" stroke={b.stroke} strokeWidth="2.500">
        {b.points.map(([x, y, r], i) => (
          <circle key={i} cx={(x - 14) * 0.8846} cy={(y - 37) * 0.42746} r={r * 0.8846} />
        ))}
      </g>
    ))}
  </svg>
);

const visualActions = [
  { label: '시각적 개체 고정', icon: <PinIcon size={38} /> },
  { label: '경고 추가', icon: <BellIcon size={40} /> },
  { label: '필터', icon: <Icon size={34} sw={1.8}><path d="M1 5h22M5 12h14M9.500 19h5" /></Icon> },
  { label: '포커스 모드', icon: <Icon size={38} sw={1.6}><path d="M9 3H5a2 2 0 0 0-2 2v14a2 2 0 0 0 2 2h14a2 2 0 0 0 2-2v-3M14 3h7v7M21 3l-8 8M3 13h8v8" /></Icon> },
  { label: '추가 옵션', icon: <Dots size={30} /> },
];

const MapVisual = () => (
  <section className="flex flex-1 flex-col bg-white px-[10px] pb-3">
    <h2 className="text-[44px] leading-[58px] text-[#252423]">합계 인원 수개, 국가 및 대륙</h2>
    <div className="flex items-center gap-3 text-[32px] leading-[58px] text-[#605e5c]">
      <span className="mr-2 font-medium text-[#484644]">대륙</span>
      {legend.map(l => (
        <span key={l.name} className="flex items-center gap-[6px]">
          <span className="size-[23px] rounded-full" style={{ background: l.color }} />
          {l.name}
        </span>
      ))}
    </div>
    <div className="relative mt-[3px] flex-1 overflow-hidden">
      <WorldMap />
      <div className="absolute bottom-[17px] left-[12px] flex items-center gap-[5px] text-[17px] leading-[28px] text-[#666]">
        <svg width="22" height="22" viewBox="0 0 22 22" aria-hidden="true">
          <path d="M0 0h10.500v10.500H0z" fill="#f25022" /><path d="M11.500 0H22v10.500H11.500z" fill="#7fba00" />
          <path d="M0 11.500h10.500V22H0z" fill="#00a4ef" /><path d="M11.500 11.500H22V22H11.500z" fill="#ffb900" />
        </svg>
        Microsoft Bing
      </div>
      <div className="absolute right-[56px] bottom-[10px] font-['Liberation_Sans',sans-serif] text-[20px] leading-[28px] text-black">
        © 2024 TomTom, © 2024 Microsoft Corporation, <a href="#" className="text-[#2c4fb5] underline">© OpenStreetMap</a>
        <a href="#" className="ml-4 text-[#2c4fb5] underline">Terms</a>
      </div>
    </div>
  </section>
);

const ReportCanvas = () => (
  <div className="flex flex-1 flex-col bg-white">
    <div className="flex flex-1 gap-[71px] border-b-4 border-dotted border-[#444] bg-[#d0e7ff] pt-[46px] pr-[91px] pb-[48px] pl-[53px]">
      <div className="flex flex-[1250_1_0] flex-col gap-[59px]">
        <section className="flex h-[223px] items-center justify-center bg-white pt-1">
          <h1 className="text-[142px] leading-none text-[#1a1a1a]">개요</h1>
        </section>
        <TreeMap />
      </div>
      <div className="flex flex-[1377_1_0] flex-col">
        <KpiCard />
        <div className="flex h-[59px] justify-end gap-[10px] text-[#605e5c]">
          {visualActions.map(a => (
            <button key={a.label} className="flex w-16 items-center justify-center bg-white" aria-label={a.label}>{a.icon}</button>
          ))}
        </div>
        <MapVisual />
      </div>
    </div>
    <div className="h-[102px]" />
  </div>
);

// ---------- page tabs and status bar ----------

const pages = ['홈', '개요', '메달 세부 분석', '종목 세부 분석'];

const PageTabs = () => {
  const [current, setCurrent] = useState('개요');
  return (
    <div className="flex h-[94px] bg-[#f3f2f1] text-[34px] text-[#252423]">
      <div className="flex w-[339px] items-center border-r-2 border-[#c8c6c4] text-[#c8c6c4]">
        <button className="ml-[27px] flex flex-col items-center" aria-label="데스크톱 레이아웃">
          <span className="h-[34px] w-[42px] rounded-md bg-[#117865]" />
          <span className="mt-[3px] h-[4px] w-[54px] bg-[#117865]" />
          <span className="mt-[14px] h-[8px] w-[64px] rounded-full bg-[#117865]" />
        </button>
        <button className="ml-[58px] text-[#484644]" aria-label="모바일 레이아웃"><Icon size={58} sw={1.300}><rect x="5.500" y="1.500" width="13" height="21" rx="2.500" /><path d="M10.500 18.500h3" /></Icon></button>
        <button className="ml-[40px]" aria-label="이전 페이지"><Icon size={24} sw={2}><path d="M17 2v20L7 12z" /></Icon></button>
        <button className="ml-[32px]" aria-label="다음 페이지"><Icon size={24} sw={2}><path d="M7 2v20l10-10z" /></Icon></button>
      </div>
      {pages.map(p => (
        <button
          key={p}
          onClick={() => setCurrent(p)}
          className={`border-r-2 border-r-[#c8c6c4] border-b-10 bg-white px-[54px] pt-[10px] last-of-type:border-r-0 ${p === current ? 'border-b-[#117865]' : 'border-b-white'}`}
        >
          {p}
        </button>
      ))}
      <button className="flex w-[105px] items-center justify-center bg-[#117865] text-white" aria-label="새 페이지"><Icon size={28} sw={5} className="[stroke-linecap:butt]"><path d="M12 1v22M1 12h22" /></Icon></button>
    </div>
  );
};

const StatusBar = () => (
  <footer className="flex h-[63px] items-center border-t-2 border-[#dedede] bg-[#f5f5f5] text-[33px] text-[#424242]">
    <span className="ml-3 flex-1">2/4 페이지</span>
    <button className="text-[36px] leading-none font-bold" aria-label="축소">-</button>
    <input
      type="range"
      min="10"
      max="190"
      defaultValue="83"
      aria-label="확대/축소"
      className="mx-3 h-8 w-[270px] appearance-none bg-[linear-gradient(#605e5c,#605e5c),linear-gradient(#605e5c,#605e5c)] bg-[length:100%_2px,2px_16px] bg-center bg-no-repeat [&::-webkit-slider-thumb]:h-7 [&::-webkit-slider-thumb]:w-[11px] [&::-webkit-slider-thumb]:appearance-none [&::-webkit-slider-thumb]:bg-[#605e5c]"
    />
    <button className="text-[36px] leading-none" aria-label="확대">+</button>
    <span className="ml-9 text-[30px]">83%</span>
    <button className="mr-[46px] ml-[58px]" aria-label="페이지에 맞춤"><Icon size={38} sw={1.500}><rect x="1.500" y="4" width="21" height="16" rx="2" /><path d="M6 10V8h3M15 8h3v2M6 14v2h3M18 14v2h-3" /></Icon></button>
  </footer>
);

// ---------- side panes ----------

const Toggle = ({ id, label }) => (
  <input
    id={id}
    type="checkbox"
    role="switch"
    aria-label={label}
    className="relative h-[42px] w-[85px] shrink-0 appearance-none rounded-full border-2 border-[#8a8886] bg-white before:absolute before:top-[8px] before:left-[10px] before:size-[22px] before:rounded-full before:bg-[#605e5c] checked:bg-[#117865]"
  />
);

const Select = ({ id, value }) => (
  <div className="relative">
    <select id={id} defaultValue={value} className="h-[64px] w-full appearance-none rounded-sm border-2 border-[#8a8886] bg-white pl-[24px] text-[34px] leading-[58px] text-[#605e5c]">
      <option>{value}</option>
    </select>
    <ChevronDown size={28} className="pointer-events-none absolute top-[18px] right-5 text-[#605e5c]" />
  </div>
);

const FilterPane = () => (
  <aside className="flex w-[88px] shrink-0 flex-col items-center border-l-3 border-[#b3b0ad] bg-white pt-[38px] text-[#252423]">
    <button aria-label="필터 창 확장"><DoubleLeft /></button>
    <Icon size={28} sw={2.600} className="mt-[46px] ml-3"><path d="M20 2v20M12 6v12M4 9v6" /></Icon>
    <h2 className="mt-[24px] text-[43px] leading-[52px] font-bold [text-orientation:sideways] [writing-mode:vertical-rl]">필터</h2>
  </aside>
);

const Section = ({ title, toggle }) => (
  <div className="flex h-[109px] shrink-0 items-center border-b-2 border-[#e1dfdd] pr-[5px] pl-[25px] text-[34px] font-bold">
    <ChevronRight size={24} sw={2.600} />
    <span className="ml-[15px] flex-1">{title}</span>
    {toggle && <Toggle label={title} />}
  </div>
);

const VisualPane = () => (
  <aside className="flex w-[482px] shrink-0 flex-col border-l-3 border-[#e1dfdd] bg-[#f3f2f1] text-[#252423]">
    <div className="mt-[22px] flex h-[56px] items-center pr-[26px] pl-[20px]">
      <h2 className="flex-1 text-[46px] leading-[56px] font-bold">시각화</h2>
      <button aria-label="시각화 창 축소"><DoubleRight /></button>
    </div>
    <p className="mt-[22px] pl-[20px] text-[34px] leading-[44px] font-medium">시각적 개체 서식 지정</p>
    <div className="mt-[10px] flex items-center justify-between pr-[32px] pl-[30px]">
      <button aria-label="시각적 개체 작성">
        <svg width="66" height="66" viewBox="0 0 66 66" fill="none" stroke="#252423" strokeWidth="3" aria-hidden="true">
          <path d="M0 3h52" />
          <path d="M2 15h62v19H2zM2 44h62v19H2z" strokeDasharray="8 5" />
        </svg>
      </button>
      <button className="flex size-[85px] items-center justify-center rounded-md bg-[#d2d0ce]" aria-label="시각적 개체 서식 지정">
        <svg width="60" height="62" viewBox="0 0 60 62" aria-hidden="true">
          <path d="M2 50V26h16M35 15h17" fill="none" stroke="#252423" strokeWidth="3" />
          <path d="M18 2h18v36L18 50z" fill={TEAL} stroke="#252423" strokeWidth="3" />
          <path d="M27 45L50 24c5-4 9-2 7 2L37 52z" fill="#f3f2f1" stroke="#252423" strokeWidth="3" strokeLinejoin="round" />
          <path d="M8 57c8-1 8-12 18-12 6 0 10 5 8 9-3 7-16 9-26 3z" fill={TEAL} stroke="#252423" strokeWidth="3" strokeLinejoin="round" />
        </svg>
      </button>
      <button aria-label="분석">
        <svg width="66" height="66" viewBox="0 0 66 66" fill="none" stroke="#252423" strokeWidth="3" aria-hidden="true">
          <circle cx="28" cy="28" r="25" />
          <path d="M4 29l10-6 11 8 25-16M15 34v14M24 38v14M33 34v16M42 28v15" />
          <path d="M44 46l19 18" strokeWidth="7" />
        </svg>
      </button>
    </div>
    {/* divider with a notch under the active icon */}
    <div className="mt-[14px] flex h-[22px] items-end text-[#8a8886]">
      <div className="h-[2px] flex-1 bg-current" />
      <svg width="44" height="22" viewBox="0 0 44 22" fill="none" stroke="currentColor" strokeWidth="2" aria-hidden="true"><path d="M0 21L22 2l22 19" /></svg>
      <div className="h-[2px] flex-1 bg-current" />
    </div>
    <label className="mt-[21px] mr-[22px] ml-[20px] flex h-[70px] items-center rounded-sm border-2 border-[#8a8886] pl-[18px] text-[#605e5c]">
      <Icon size={42} sw={1.3}><circle cx="15" cy="9" r="7" /><path d="M10 14l-8 8" /></Icon>
      <input type="search" placeholder="검색" aria-label="서식 검색" className="ml-4 w-full bg-transparent text-[39px] outline-none placeholder:text-[#605e5c]" />
    </label>
    <div className="mt-[38px] flex h-[70px] items-start pl-[29px] text-[40px] leading-[56px]">
      <button>시각적 개체</button>
      <button className="ml-[46px] border-b-4 border-[#117865] pb-[10px] font-bold">일반</button>
      <button className="mt-[16px] ml-[56px]" aria-label="추가 탭"><Dots size={28} /></button>
    </div>
    <div className="mt-[36px] flex min-h-0 flex-1">
      <div className="flex flex-1 flex-col overflow-hidden">
        <Section title="속성" />
        <Section title="제목" toggle />
        <Section title="효과" />
        <div className="flex h-[107px] shrink-0 items-center pl-[23px] text-[34px] font-bold">
          <ChevronDown size={26} sw={2.600} />
          <span className="ml-[15px]">데이터 서식</span>
        </div>
        <div className="h-[834px] shrink-0 overflow-hidden bg-[#dfdedc] pt-[21px] pr-[6px] pl-[20px]">
          <div className="h-[192px] rounded-lg bg-[#f3f2f1] px-[22px] pt-[31px] shadow-md">
            <label htmlFor="apply-to" className="block text-[34px] leading-[44px] font-medium">설정 적용 대상</label>
            <div className="mt-[32px]"><Select id="apply-to" value="메달 총계" /></div>
          </div>
          <div className="mt-[21px] h-[533px] rounded-lg bg-[#f3f2f1] px-[22px] pt-[31px] text-[34px] leading-[44px] shadow-md">
            <h3 className="flex items-center gap-[14px] font-bold"><ChevronDown size={26} sw={2.600} />형식 옵션</h3>
            <label htmlFor="format" className="mt-[30px] mb-[10px] block">서식</label>
            <Select id="format" value="정수" />
            <div className="mt-[24px] flex h-[42px] items-center justify-between">
              <label htmlFor="percent">백분율 형식</label>
              <Toggle id="percent" label="백분율 형식" />
            </div>
            <div className="relative mt-[32px] flex h-[42px] items-center justify-between">
              <label htmlFor="thousands">천단위 구분 기호</label>
              <Toggle id="thousands" label="천단위 구분 기호" />
              <span className="pointer-events-none absolute -top-[17px] -right-[9px] h-[75px] w-[109px] border-9 border-[#ff0000]" />
            </div>
            <label htmlFor="decimals" className="mt-[30px] mb-[10px] block">소수 자릿수</label>
            <div className="relative w-[188px]">
              <input id="decimals" type="text" inputMode="numeric" defaultValue="0" className="h-[64px] w-full rounded-sm border-2 border-[#8a8886] bg-white pl-[10px] text-[32px] text-[#605e5c]" />
              <Icon size={18} sw={1.800} className="absolute top-[8px] right-[10px] text-[#605e5c]"><path d="M3 16l9-9 9 9" /></Icon>
              <Icon size={18} sw={1.800} className="absolute right-[10px] bottom-[8px] text-[#605e5c]"><path d="M3 8l9 9 9-9" /></Icon>
            </div>
          </div>
          <button className="mt-[29px] flex items-center gap-[20px] pl-[8px] text-[34px] leading-[48px] whitespace-nowrap">
            <Icon size={26} sw={2} className="text-[#117865]"><path d="M2 2v7h7M3 9h13a6 6 0 0 1 0 13H7" /></Icon>
            기본값으로 다시 설정
          </button>
        </div>
      </div>
      <div className="mb-[21px] w-[16px] rounded-t-full bg-[#cbc8c6]" />
    </div>
  </aside>
);

const tree = [
  { kind: 'table', icon: 'calc', label: '텍스트 보관용 테이블' },
  { kind: 'field', icon: 'calc', label: '텍스트_개요' },
  { kind: 'field', icon: 'calc', label: '텍스트_메달 세...' },
  { kind: 'field', icon: 'calc', label: '텍스트_종목 세...' },
  { kind: 'table', used: true, label: '국가 테이블' },
  { kind: 'field', checked: true, label: '국가' },
  { kind: 'field', label: '국기' },
  { kind: 'field', label: '대륙' },
  { kind: 'field', label: '인원 수' },
  { kind: 'table', used: true, label: '국가별 종목별 메달 수' },
  { kind: 'field', label: '국가' },
  { kind: 'field', icon: 'sum', checked: true, label: '금' },
  { kind: 'field', icon: 'sum', checked: true, label: '동' },
  { kind: 'field', icon: 'sum', checked: true, label: '은' },
  { kind: 'field', label: '종목' },
  { kind: 'folder', label: '측정값 모음' },
  { kind: 'field', icon: 'sum', checked: true, label: '합계' },
  { kind: 'table', label: '종목 테이블' },
  { kind: 'field', label: '종목' },
  { kind: 'field', label: '한 국가의 최대 ...' },
];

const TreeRow = ({ row, index }) => {
  if (row.kind === 'table') {
    return (
      <li className="flex h-16 items-center pl-[36px]">
        <ChevronDown size={26} />
        <span className="relative ml-[12px] flex w-[40px]">
          {row.icon === 'calc' ? <CalcStackIcon /> : <TableIcon />}
          {row.used && (
            <span className="absolute top-[20px] left-[16px] size-[31px] rounded-full bg-[#117865]">
              <Icon size={31} sw={2.600} className="text-white"><path d="M7 12l4 4 6-7" /></Icon>
            </span>
          )}
        </span>
        <span className="ml-[11px]">{row.label}</span>
      </li>
    );
  }
  if (row.kind === 'folder') {
    return (
      <li className="flex h-16 items-center pl-[76px]">
        <ChevronRight size={26} />
        <span className="ml-[9px]"><FolderIcon size={44} /></span>
        <span className="ml-[9px]">{row.label}</span>
      </li>
    );
  }
  const id = `field-${index}`;
  return (
    <li className="flex h-16 items-center pl-[116px]">
      <span className="relative flex size-8">
        <input id={id} type="checkbox" defaultChecked={row.checked} className="peer size-8 appearance-none rounded-sm border-2 border-[#8a8886] checked:bg-[#117865]" />
        <Icon size={32} sw={2} className="pointer-events-none absolute inset-0 hidden text-white peer-checked:block"><path d="M5 12l4.500 4.500L19 7.500" /></Icon>
      </span>
      <span className="ml-[19px] flex w-[38px] justify-center">
        {row.icon === 'calc' && <CalcIcon />}
        {row.icon === 'sum' && <SigmaIcon />}
      </span>
      <label htmlFor={id} className="ml-[14px] whitespace-nowrap">{row.label}</label>
    </li>
  );
};

const DataPane = () => (
  <aside className="relative w-[479px] shrink-0 border-l-3 border-[#e1dfdd] bg-[#f3f2f1] text-[#252423]">
    <div className="mt-[22px] flex h-[56px] items-center pr-[22px] pl-[20px]">
      <h2 className="flex-1 text-[46px] leading-[56px] font-bold">데이터</h2>
      <button aria-label="데이터 창 축소"><DoubleRight /></button>
    </div>
    <label className="mt-[44px] mr-[9px] ml-[10px] flex h-[64px] items-center rounded-lg border-2 border-[#d1d1d1] border-b-[#616161] bg-white pl-[26px] text-[#616161]">
      <SearchIcon size={44} />
      <input type="search" placeholder="검색" aria-label="데이터 검색" className="ml-4 w-full bg-transparent text-[39px] outline-none placeholder:text-[#616161]" />
    </label>
    <ul className="mt-[23px] text-[34px]">
      {tree.map((row, i) => <TreeRow key={i} row={row} index={i} />)}
    </ul>
    {/* step marker */}
    <span className="absolute top-[1500px] left-[-29px] flex size-[157px] items-center justify-center rounded-full border-14 border-[#cc0000] bg-white text-[100px] leading-none font-bold text-[#cc0000]">1</span>
  </aside>
);

export default function App() {
  return (
    <div className="flex h-screen flex-col overflow-hidden bg-[#3b3b3b] font-['Noto_Sans','Noto_Sans_CJK_KR',sans-serif]">
      <BrowserTabs />
      <AddressBar />
      <div className="mr-[13px] mb-[10px] ml-[11px] flex min-h-0 flex-1 flex-col overflow-hidden rounded-[20px] bg-[#f0f0f0]">
        <AppHeader />
        <div className="flex min-h-0 flex-1">
          <SideNav />
          <main className="flex min-w-0 flex-1 flex-col shadow-[-4px_0_10px_rgba(0,0,0,0.15)]">
            <Toolbar />
            <div className="flex min-h-0 flex-1">
              <div className="flex min-w-0 flex-1 flex-col">
                <div className="flex min-h-0 flex-1">
                  <ReportCanvas />
                  <FilterPane />
                </div>
                <PageTabs />
              </div>
              <VisualPane />
              <DataPane />
            </div>
            <StatusBar />
          </main>
        </div>
      </div>
    </div>
  );
}
